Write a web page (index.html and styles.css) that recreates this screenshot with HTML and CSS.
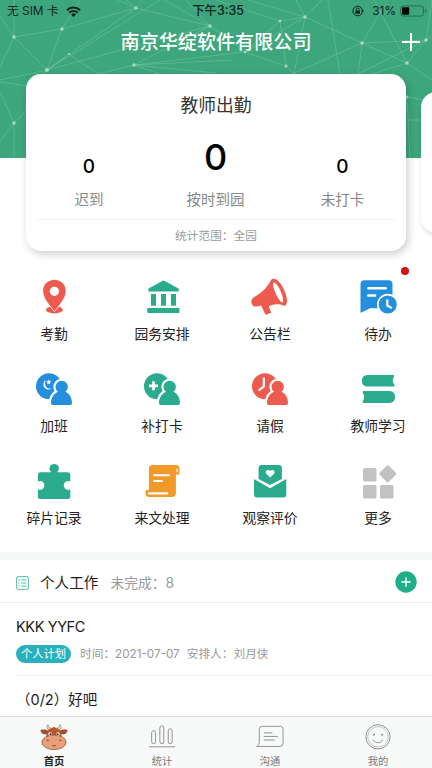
FILE: index.html
```html
<!DOCTYPE html>
<html lang="zh-CN">
<head>
<meta charset="utf-8">
<title>首页</title>
<link rel="stylesheet" href="styles.css">
</head>
<body>
<div class="app">
  <header class="hero">
    <svg class="mesh" viewBox="0 0 432 158" aria-hidden="true">
      <g fill="none" stroke="#8fd3b2" stroke-width="1" stroke-opacity=".36">
        <path d="M14 37L0 16M14 37L62 29L47 70L14 37L0 67M14 37V0M62 29L80 0M62 29L136 8L47 70M136 8L126 0M136 8L142 0M136 8L210 26L47 70L69 54L98 74M136 8L118 0M47 70L0 80M47 70L28 86L0 82M47 70L160 0M14 123L0 92M14 123L28 109M14 123V158M14 123L0 141M134 65L98 74M134 65L210 26M134 65L160 74M134 65L232 60M134 65L245 52L286 66M134 65L216 73M210 26L186 0M210 26L164 0M210 26L245 52L280 21L305 17L245 52M305 17L296 0M305 17L322 0M305 17L362 43L292 74M305 17L294 74M280 21L286 66L294 74M280 21L216 0M305 17L248 0M340 74L328 0M362 43L358 74M362 43L407 63L372 74M362 43L426 40L407 63L432 80M426 40L432 36M426 40L432 0M362 43L388 0M407 63L374 0M426 40L358 74M407 97L410 158M407 97L424 100M407 120H432"/>
      </g>
      <g fill="#a5dcc2">
        <circle cx="14" cy="37" r="1.7"/><circle cx="62" cy="29" r="1.7"/><circle cx="136" cy="8" r="1.7"/><circle cx="47" cy="70" r="1.9"/><circle cx="134" cy="65" r="1.7"/><circle cx="210" cy="26" r="1.7"/><circle cx="305" cy="17" r="1.7"/><circle cx="280" cy="21" r="1.3"/><circle cx="245" cy="52" r="1.3"/><circle cx="286" cy="66" r="1.5"/><circle cx="362" cy="43" r="1.7"/><circle cx="407" cy="63" r="1.7"/><circle cx="426" cy="40" r="1.7"/><circle cx="407" cy="97" r="1.5"/><circle cx="14" cy="123" r="1.7"/><circle cx="69" cy="54" r="1"/>
      </g>
    </svg>
    <div class="status">
      <div class="status-left">
        <span>无 SIM 卡</span>
        <svg width="15" height="11" viewBox="0 0 15 11"><g fill="none" stroke="#10241b" stroke-width="2"><path d="M.9 4.2a9.4 9.4 0 0 1 13.2 0M3.3 6.8a6 6 0 0 1 8.4 0"/></g><path d="M7.5 11L5 8.5a3.6 3.6 0 0 1 5 0z" fill="#10241b"/></svg>
      </div>
      <div class="clock">下午3:35</div>
      <div class="status-right">
        <svg width="12" height="12" viewBox="0 0 12 12"><circle cx="5.7" cy="6" r="4.8" fill="none" stroke="#10241b" stroke-width="1"/><path d="M9 5.3h3L10.5 7.4z" fill="#10241b"/><rect x="3.4" y="5.4" width="4.6" height="3.3" rx=".5" fill="#10241b"/><path d="M4.3 5.5V4.400a1.400 1.400 0 0 1 2.800 0v1.100" fill="none" stroke="#10241b"/></svg>
        <span>31%</span>
        <svg width="27" height="12" viewBox="0 0 27 12"><rect x=".6" y=".9" width="22.8" height="10.2" rx="2.4" fill="none" stroke="#256e50"/><rect x="2" y="2.3" width="7.2" height="7.4" rx="1" fill="#050807"/><path d="M25 4v4q1.4-.6 1.4-2T25 4z" fill="#256e50"/></svg>
      </div>
    </div>
    <div class="titlebar">
      <h1>南京华绽软件有限公司</h1>
      <svg class="add" width="20" height="20" viewBox="0 0 20 20"><path d="M10 1v18M1 10h18" stroke="#fff" stroke-width="2"/></svg>
    </div>
  </header>

  <section class="cards">
    <article class="card">
      <h2>教师出勤</h2>
      <div class="stats">
        <div class="stat"><b>0</b><span>迟到</span></div>
        <div class="stat main"><b>0</b><span>按时到园</span></div>
        <div class="stat"><b>0</b><span>未打卡</span></div>
      </div>
      <p class="range">统计范围：全园</p>
    </article>
    <article class="card next"></article>
  </section>

  <nav class="grid">
    <a class="cell red"><svg viewBox="0 0 40 40"><ellipse cx="20.400" cy="32.800" rx="8.500" ry="3.600"/><path d="M20.400 2.400c-6.600 0-11.700 5-11.700 11.400C8.700 21.500 15.900 29 20.400 34.500 24.900 29 32.100 21.500 32.100 13.800 32.100 7.400 27 2.400 20.400 2.400z" stroke="#fff" stroke-width=".8"/><circle cx="20.400" cy="14.300" r="4.600" fill="#fff"/></svg><span>考勤</span></a>
    <a class="cell green"><svg viewBox="0 0 40 40"><path d="M20.800 3.700q.7-.4 1.400 0L36 11.300q.8.500.8 1.300v1.200q0 .7-.7.700H7q-.7 0-.7-.7v-1.200q0-.8.700-1.300zM9 17h5v11.700H9zM19 17h5v11.700h-5zM29 17h5v11.700h-5z"/><rect x="5.200" y="31" width="32.300" height="5" rx="1"/></svg><span>园务安排</span></a>
    <a class="cell red"><svg viewBox="0 0 40 40"><g transform="translate(-.8 -.4)"><path d="M21.800 3.500C18 12 10 17.800 4.800 20.600c-5 3-2.400 10.200 2.800 9.200l4.300-.8 4 8.400q.5 1 1.500.6l4-1.500q.8-.4.400-1.200l-2.300-5.300 1.700-1.200c4.600-1.700 10.300-1.700 14.400.5 5-2.800.7-15.300-4.200-22.200-3.300-4.500-7.700-6.600-9.600-3.600z"/><path d="M24.600 5.800c-3 1.500 3.700 17.200 8.300 20.200 3.700-.7-3.600-20-8.300-20.200z" fill="#fff"/></g></svg><span>公告栏</span></a>
    <a class="cell blue"><svg viewBox="0 0 40 40"><path d="M6.300 3.200h24.200a4 4 0 0 1 4 4v24H12L3.500 35.500q-1 .5-1-.7V7.200a4 4 0 0 1 3.800-4z"/><path d="M10.300 11.200h17.400M10.300 18.500h6.800" stroke="#fff" stroke-width="2.500" stroke-linecap="round"/><circle cx="29.700" cy="27.500" r="9.900" stroke="#fff" stroke-width="1.600"/><path d="M29.300 22.500v6l4.500 2.600" fill="none" stroke="#fff" stroke-width="2.200"/></svg><span>待办</span><i class="dot"></i></a>

    <a class="cell blue"><svg viewBox="0 0 40 40"><circle cx="15" cy="17.300" r="13"/><path d="M11.500 11a5.300 5.300 0 1 0 6.500 8.500C12.500 21 9.800 16 11.500 11z" fill="#fff"/><path d="M14.800 10.500l.8 1.600 1.800.2-1.400 1.200.4 1.800-1.600-.9-1.600.9.4-1.800-1.400-1.200 1.800-.2z" fill="#fff"/><path class="person" d="M24 22.800a6.200 6.200 0 1 1 7.400 0c3.900 1.600 6.600 5.800 6.600 11.400q0 1.800-1.800 1.800H18.800q-1.800 0-1.800-1.800c0-5.600 3.100-9.800 7-11.400z"/></svg><span>加班</span></a>
    <a class="cell green"><svg viewBox="0 0 40 40"><circle cx="15" cy="17.300" r="13"/><path d="M7 16.800h9M11.500 12.300v9" fill="none" stroke="#fff" stroke-width="2.700"/><path class="person" d="M24 22.800a6.200 6.200 0 1 1 7.400 0c3.900 1.600 6.600 5.800 6.600 11.400q0 1.800-1.800 1.800H18.800q-1.800 0-1.800-1.800c0-5.600 3.100-9.800 7-11.400z"/></svg><span>补打卡</span></a>
    <a class="cell red"><svg viewBox="0 0 40 40"><circle cx="15" cy="17.300" r="13"/><path d="M13.800 8.500v9L8.600 21.500" fill="none" stroke="#fff" stroke-width="2.200"/><path class="person" d="M24 22.800a6.200 6.200 0 1 1 7.400 0c3.900 1.600 6.600 5.800 6.600 11.400q0 1.800-1.800 1.800H18.800q-1.800 0-1.800-1.800c0-5.600 3.100-9.800 7-11.400z"/></svg><span>请假</span></a>
    <a class="cell green"><svg viewBox="0 0 40 40"><path d="M9.500 6h26q1.500.3.500 1.600c-2 3.300-1.600 6.100.5 8.500q.7 1.300-.8 1.500H9.500C2 17.600 2 6 9.500 6zM5.500 22h26c7.500 0 7.500 12 0 12h-26q-1.500-.2-.8-1.600c2-3.200 2-5.700 0-8.800q-.6-1.400.8-1.600z"/></svg><span>教师学习</span></a>

    <a class="cell green"><svg viewBox="0 0 40 40"><path d="M17.200 11.200a4.700 4.700 0 1 1 6 0h10.300a2.800 2.800 0 0 1 2.800 2.800v6.500a4.400 4.400 0 1 0 0 7.700v7.300a2.500 2.500 0 0 1-2.500 2.500H6.400A2.500 2.500 0 0 1 3.900 35.500v-7.300a4.400 4.400 0 1 0 0-7.700V14a2.800 2.800 0 0 1 2.800-2.800z"/></svg><span>碎片记录</span></a>
    <a class="cell orange"><svg viewBox="0 0 40 40"><g transform="translate(1.500 0)"><path d="M9 4h23a4 4 0 0 1 4 4v5.600h-3.600V32a4 4 0 0 1-4 4H6a4 4 0 0 1-4-4v-3h3.400V7.700A3.700 3.700 0 0 1 9 4z"/><path d="M10.800 14.200h14.800M10.800 20h7.500M5.500 32.400h18.200" stroke="#fff" stroke-width="2.100" stroke-linecap="round"/><path d="M33.600 7.500v3.800" stroke="#fff" stroke-width="1.300"/></g></svg><span>来文处理</span></a>
    <a class="cell green"><svg viewBox="0 0 40 40"><path d="M11.500 4h17.400a3 3 0 0 1 3 3v11L20 24 8.600 18V7a3 3 0 0 1 2.900-3zM4 18l16 9.200L36.300 18v15.500a3 3 0 0 1-3 3H7a3 3 0 0 1-3-3z"/><path d="M20.100 16.500l-3.700-3.600c-2.200-3 1.600-5.300 3.700-2.900 2.200-2.400 6-.1 3.800 2.900z" fill="#fff"/></svg><span>观察评价</span></a>
    <a class="cell gray"><svg viewBox="0 0 40 40"><rect x="5" y="7" width="13.500" height="13.500" rx="1.500"/><rect x="5" y="24" width="13.500" height="13.500" rx="1.500"/><rect x="22" y="24" width="13.500" height="13.500" rx="1.500"/><rect x="23.200" y="6.300" width="13" height="13" rx="1.500" transform="rotate(45 29.700 12.800)"/></svg><span>更多</span></a>
  </nav>

  <section class="work">
    <div class="work-head">
      <svg class="list" width="13" height="14" viewBox="0 0 13 14"><rect x=".6" y=".6" width="11.800" height="12.800" rx="1.500" fill="#f5fffb" stroke="#58bda0"/><path d="M2.500 4h1.300M5.300 4h5M2.500 7h1.300M5.300 7h5M2.500 10h1.300M5.300 10h5" stroke="#58bda0"/></svg>
      <h3>个人工作</h3>
      <span class="left">未完成：8</span>
      <svg class="plus" width="22" height="22" viewBox="0 0 22 22"><circle cx="11" cy="11" r="10.700" fill="#1fae8a"/><path d="M11 6.300v9.400M6.300 11h9.400" stroke="#fff" stroke-width="1.300"/></svg>
    </div>
    <div class="task">
      <h4 class="latin">KKK YYFC</h4>
      <div class="meta"><em>个人计划</em><span class="time">时间：2021-07-07</span><span>安排人：刘月侠</span></div>
    </div>
    <div class="task second"><h4>（0/2）好吧</h4></div>
  </section>

  <footer class="tabs">
    <a class="tab on"><svg viewBox="0 0 30 30"><path d="M10 7.500C6.500 6.500 6.800 3 8.700 1.500 8.600 3.600 9.500 4.600 12.300 5.600zM20 7.500c3.500-1 3.200-4.500 1.300-6 .1 2.100-.8 3.100-3.600 4.100z" fill="#ecd0a8" stroke="#8a6243" stroke-width=".5"/><path d="M7.500 11.500C4 12.500 1.500 11.500.8 7.700 3 7 6 7 9 8.500zM22.500 11.500c3.500 1 6 0 6.700-3.800-2.200-.7-5.200-.7-8.200.8z" fill="#a5502d" stroke="#7a3d26" stroke-width=".5"/><path d="M6.500 18C6.500 9.500 9 5.500 12.500 5.500L15 4l2.500 1.500c3.500 0 6 4 6 12.500z" fill="#b4592f"/><ellipse cx="15" cy="20.700" rx="13" ry="7.800" fill="#e6a17b" stroke="#8d4f38" stroke-width=".8"/><circle cx="10.700" cy="11.800" r="1.900" fill="#fff"/><circle cx="19.300" cy="11.800" r="1.900" fill="#fff"/><circle cx="11.100" cy="12" r="1.100" fill="#3a241d"/><circle cx="18.900" cy="12" r="1.100" fill="#3a241d"/><ellipse cx="8.300" cy="18.600" rx="1.800" ry="1" fill="#bd6247"/><ellipse cx="21.700" cy="18.600" rx="1.800" ry="1" fill="#bd6247"/><path d="M12.800 24q2.200 1.500 4.400 0" fill="none" stroke="#84412f" stroke-width=".9"/></svg><span>首页</span></a>
    <a class="tab"><svg viewBox="0 0 30 30"><g fill="none" stroke="#8c8c8c"><rect x="3.900" y="8.200" width="4.200" height="14" rx="2.100"/><rect x="12.700" y="3.100" width="4.200" height="19.100" rx="2.100"/><rect x="21.700" y="6.200" width="4.200" height="16" rx="2.100"/><path d="M1 25.500h28"/></g></svg><span>统计</span></a>
    <a class="tab"><svg viewBox="0 0 30 30"><g fill="none" stroke="#8c8c8c"><path d="M6.500 3.600h19.500a3 3 0 0 1 3 3v15.500a3 3 0 0 1-3 3H.8q2.700-1.800 2.700-4.500V6.600a3 3 0 0 1 3-3zM8.300 10.600h9.200M8.300 14.400h15.200M8.300 18.200h11.700"/></g></svg><span>沟通</span></a>
    <a class="tab"><svg viewBox="0 0 30 30"><g fill="none" stroke="#8c8c8c"><circle cx="15" cy="14.800" r="13"/><circle cx="15" cy="14.800" r="11" stroke-width=".5"/><path d="M9.500 18q5.500 6.500 11 0"/></g><circle cx="10.700" cy="12.500" r="1" fill="#777"/><circle cx="19.300" cy="12.500" r="1" fill="#777"/></svg><span>我的</span></a>
  </footer>
</div>
</body>
</html>
```

FILE: styles.css
```css
* { box-sizing: border-box; margin: 0; padding: 0; }
body {
  font-family: Inter, "Noto Sans CJK SC", sans-serif;
  background: #fff;
  color: #1c1c1c;
  overflow: hidden;
}
svg { display: block; flex: none; }
.app {
  width: 432px;
  height: 768px;
  display: flex;
  flex-direction: column;
  overflow: hidden;
}

/* Header */
.hero { position: relative; height: 158px; background: #3da67c; flex: none; }
.mesh { position: absolute; inset: 0; width: 432px; height: 158px; }
.status {
  position: relative;
  height: 21px;
  display: grid;
  grid-template-columns: 1fr auto 1fr;
  align-items: center;
  padding: 1px 5px 0 7px;
  font-size: 11.8px;
  line-height: 20px;
  color: #10241b;
}
.status-left, .status-right { display: flex; align-items: center; gap: 7px; }
.status-right { justify-content: flex-end; gap: 4px; }
.status-right span { margin-left: 4px; }
.clock { font-size: 12.4px; font-weight: 500; padding-left: 2px; }
.titlebar {
  position: relative;
  height: 42px;
  display: flex;
  align-items: center;
  justify-content: center;
}
h1 { font-size: 19.1px; font-weight: 500; line-height: 42px; color: #fff; }
.add { position: absolute; right: 11px; top: 11px; }

/* Attendance cards */
.cards {
  position: relative;
  display: flex;
  align-items: center;
  gap: 15px;
  height: 177px;
  margin-top: -84px;
  padding-left: 26px;
  flex: none;
}
.card {
  width: 380px;
  height: 177px;
  flex: none;
  border-radius: 15px;
  background: #fff;
  box-shadow: 2px 3px 8px rgba(0, 0, 0, .2);
  padding: 18px 11px 0;
  text-align: center;
}
.card.next { height: 141px; box-shadow: 1px 2px 5px rgba(0, 0, 0, .16); }
h2 { font-size: 17.8px; font-weight: 400; line-height: 28px; color: #333; }
.stats {
  display: grid;
  grid-template-columns: 104px 149px 105px;
  height: 100px;
  border-bottom: 1px solid #f3f3f3;
}
.stat { display: flex; flex-direction: column; justify-content: flex-end; }
.stat b { font-size: 19px; font-weight: 500; line-height: 24px; color: #000; margin-bottom: 10px; }
.stat.main b { font-size: 36px; line-height: 44px; }
.stat span { font-size: 14.500px; line-height: 22px; color: #888; margin-bottom: 8px; }
.range { font-size: 11.700px; line-height: 33px; color: #9a9a9a; }

/* Feature grid */
.grid {
  display: grid;
  grid-template-columns: repeat(4, 108px);
  grid-auto-rows: 92px;
  padding-top: 26px;
  height: 301px;
  flex: none;
}
.cell { position: relative; display: flex; flex-direction: column; align-items: center; }
.cell svg { width: 40px; height: 40px; fill: currentColor; }
.cell span { margin-top: 7px; font-size: 13.800px; line-height: 20px; color: #222; }
.person { stroke: #fff; stroke-width: 4.2px; paint-order: stroke; }
.red { color: #ec5b4d; }
.green { color: #2aab8e; }
.blue { color: #268fdd; }
.orange { color: #f29a29; }
.gray { color: #c2c2c2; }
.dot {
  position: absolute;
  left: 77px;
  top: -10px;
  width: 8px;
  height: 8px;
  border-radius: 50%;
  background: #cf1414;
}

/* Personal work */
.work { border-top: 8px solid #f5f6f6; flex: none; height: 164px; overflow: hidden; }
.work-head {
  display: flex;
  align-items: center;
  height: 43px;
  padding: 1px 15px 0 16px;
  border-bottom: 1px solid #ececec;
}
.list { margin-top: 2px; }
h3 { margin: 2px 0 0 11px; font-size: 14.600px; font-weight: 400; line-height: 40px; }
.left { margin: 2px 0 0 12px; font-size: 13.800px; line-height: 40px; color: #999; }
.plus { margin-left: auto; }
.task { margin-left: 16px; height: 73px; border-bottom: 1px solid #eee; padding-top: 13px; }
h4 { font-size: 14.500px; font-weight: 400; line-height: 22px; }
.latin { letter-spacing: -.4px; }
.meta { display: flex; align-items: center; margin-top: 7px; font-size: 11.700px; line-height: 18px; color: #999; }
.meta em {
  width: 55px;
  border-radius: 9px;
  background: #28b0bc;
  color: #fff;
  font-style: normal;
  font-size: 11.300px;
  text-align: center;
  margin-right: 9px;
}
.time { margin-right: 7px; }

/* Tab bar */
.tabs {
  height: 52px;
  flex: none;
  display: grid;
  grid-template-columns: repeat(4, 108px);
  background: #f8f9f9;
  border-top: 1px solid #d9dada;
}
.tab { display: flex; flex-direction: column; align-items: center; padding-top: 6px; font-size: 10.300px; line-height: 15px; color: #777; }
.tab svg { width: 28px; height: 28px; }
.tab span { margin-top: 3px; }
.tab.on { color: #222; font-weight: 700; }
```
